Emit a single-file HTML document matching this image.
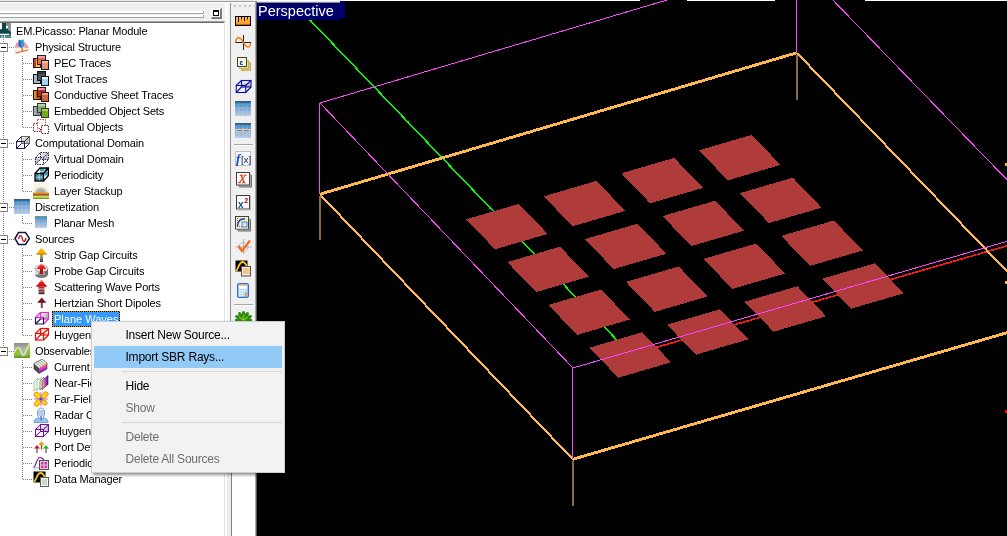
<!DOCTYPE html>
<html><head><meta charset="utf-8"><title>EM.Picasso</title>
<style>
html,body{margin:0;padding:0;}
body{width:1007px;height:536px;overflow:hidden;background:#000;position:relative;font-family:"Liberation Sans",sans-serif;}
#vp{position:absolute;left:0;top:0;}
#topline div{position:absolute;top:0;height:1px;background:#fff;}
#persp{position:absolute;left:257px;top:3px;width:83px;height:17px;background:#00006a;color:#fff;font-size:14.5px;line-height:17px;white-space:nowrap;will-change:transform;}
#persp i{position:absolute;left:83px;top:-2px;width:5px;height:17px;background:#00006a;}#persp b{position:absolute;left:0;top:-2px;width:83px;height:1px;background:#e8e8e8;}#persp u{position:absolute;left:0;top:-1px;width:83px;height:1px;background:#8a8a8a;}
#persp span{position:absolute;left:1px;top:0px;}
#left{position:absolute;left:0;top:0;width:257px;height:536px;background:#f0f0f0;}
#tree{position:absolute;left:0;top:23px;width:224px;height:513px;background:#fff;}
#treewrap{position:absolute;left:0;top:0;width:224px;height:536px;overflow:hidden;will-change:transform;}
.row{position:absolute;left:0;height:16px;width:224px;}
.ic{position:absolute;top:0;width:16px;height:16px;}
.ic svg{display:block;}
.tx{position:absolute;top:0;height:16px;line-height:16px;font-size:11px;color:#000;white-space:nowrap;letter-spacing:-0.15px;padding:0 1px;}
.tx.sel{color:#fff;left:52px !important;width:68px;box-sizing:border-box;padding:0 0 0 2px;margin:0;letter-spacing:0;background:linear-gradient(90deg,#000 50%,#f08000 50%) top left/2px 1px repeat-x,linear-gradient(90deg,#000 50%,#f08000 50%) bottom left/2px 1px repeat-x,linear-gradient(0deg,#000 50%,#f08000 50%) top left/1px 2px repeat-y,linear-gradient(0deg,#000 50%,#f08000 50%) top right/1px 2px repeat-y,#3399ff;}
.hdot{position:absolute;height:1px;background-image:linear-gradient(to right,#808080 50%,transparent 50%);background-size:2px 1px;}
.vdot{position:absolute;width:1px;background-image:linear-gradient(to bottom,#808080 50%,transparent 50%);background-size:1px 2px;}
.pm{position:absolute;left:-1px;width:9px;height:9px;box-sizing:border-box;border:1px solid #808080;background:#fff;}
.pm:after{content:"";position:absolute;left:1px;top:3px;width:5px;height:1px;background:#000;}
#hdr{position:absolute;left:0;top:0;width:226px;height:23px;background:#f0f0f0;}
#menu{position:absolute;left:91px;top:321px;width:194px;height:152px;background:#f2f2f2;border:1px solid #ccc;box-sizing:border-box;box-shadow:2px 2px 3px rgba(0,0,0,0.45);will-change:transform;font-size:12px;color:#000;}
#menu .it{position:absolute;left:2px;width:188px;height:22px;line-height:22px;white-space:nowrap;}
#menu .it span{position:absolute;left:31.5px;top:0px;letter-spacing:-0.22px}
#menu .dis{color:#6d6d6d;}
#menu .hl{background:#91c9f7;}
#menu .sep{position:absolute;left:30px;width:160px;height:1px;background:#d7d7d7;}
</style></head><body>
<svg id="vp" width="1007" height="536" viewBox="0 0 1007 536" shape-rendering="crispEdges">
<g stroke="#00ff00" stroke-width="1.5" fill="none"><line x1="310" y1="20" x2="630" y2="353.7"/></g>
<g fill="#00ff00"><rect x="325.0" y="35.8" width="1.6" height="1.6"/><rect x="345.5" y="57.2" width="1.6" height="1.6"/><rect x="366.0" y="78.6" width="1.6" height="1.6"/><rect x="386.5" y="100.0" width="1.6" height="1.6"/><rect x="407.0" y="121.4" width="1.6" height="1.6"/><rect x="427.5" y="142.8" width="1.6" height="1.6"/><rect x="448.0" y="164.2" width="1.6" height="1.6"/><rect x="468.5" y="185.6" width="1.6" height="1.6"/><rect x="489.0" y="207.0" width="1.6" height="1.6"/><rect x="509.5" y="228.4" width="1.6" height="1.6"/><rect x="530.0" y="249.8" width="1.6" height="1.6"/><rect x="550.5" y="271.2" width="1.6" height="1.6"/><rect x="571.0" y="292.6" width="1.6" height="1.6"/><rect x="591.5" y="314.0" width="1.6" height="1.6"/><rect x="612.0" y="335.4" width="1.6" height="1.6"/></g>
<g stroke="#ff1818" stroke-width="1.6" fill="none"><line x1="630" y1="355" x2="1007" y2="245.8"/></g>
<g fill="#b03b3b">
<polygon points="466.2,219.3 518.9,203.9 547.7,233.9 495.0,249.3"/>
<polygon points="507.3,262.1 560.0,246.7 588.8,276.7 536.1,292.1"/>
<polygon points="548.4,304.9 601.1,289.5 629.9,319.5 577.2,334.9"/>
<polygon points="589.5,347.7 642.2,332.3 671.0,362.3 618.3,377.7"/>
<polygon points="543.8,196.3 596.5,180.9 625.3,210.9 572.6,226.3"/>
<polygon points="584.9,239.1 637.6,223.7 666.4,253.7 613.7,269.1"/>
<polygon points="626.0,281.9 678.7,266.5 707.5,296.5 654.8,311.9"/>
<polygon points="667.1,324.7 719.8,309.3 748.6,339.3 695.9,354.7"/>
<polygon points="621.4,173.3 674.1,157.9 702.9,187.9 650.2,203.3"/>
<polygon points="662.5,216.1 715.2,200.7 744.0,230.7 691.3,246.1"/>
<polygon points="703.6,258.9 756.3,243.5 785.1,273.5 732.4,288.9"/>
<polygon points="744.7,301.7 797.4,286.3 826.2,316.3 773.5,331.7"/>
<polygon points="699.0,150.3 751.7,134.9 780.5,164.9 727.8,180.3"/>
<polygon points="740.1,193.1 792.8,177.7 821.6,207.7 768.9,223.1"/>
<polygon points="781.2,235.9 833.9,220.5 862.7,250.5 810.0,265.9"/>
<polygon points="822.3,278.7 875.0,263.3 903.8,293.3 851.1,308.7"/>
</g>
<g stroke="#ffb850" stroke-width="2.9" fill="none">
<line x1="320" y1="194.2" x2="797" y2="52.7"/>
<line x1="573" y1="459.2" x2="1007" y2="332.7"/>
</g>
<g stroke="#ffb850" stroke-width="2.1" fill="none">
<line x1="320" y1="194.5" x2="573" y2="459.5"/>
<line x1="797" y1="53" x2="1007" y2="271.3"/>
</g>
<g stroke="#8a6a44" stroke-width="2" fill="none">
<line x1="320" y1="196" x2="320" y2="240"/>
<line x1="797" y1="55" x2="797" y2="100"/>
<line x1="573" y1="461" x2="573" y2="506"/>
</g>
<g stroke="#fb46fb" stroke-width="1" fill="none">
<line x1="320" y1="103" x2="667" y2="0"/>
<line x1="319.5" y1="103" x2="319.5" y2="194"/>
<line x1="320" y1="103" x2="573" y2="368"/>
<line x1="572.5" y1="368" x2="572.5" y2="459"/>
<line x1="573" y1="368" x2="1007" y2="241.3"/>
<line x1="796.5" y1="0" x2="796.5" y2="53"/>
<line x1="832.8" y1="0" x2="1007" y2="179.7"/>
</g>
<g fill="#ffb85a"><rect x="1005" y="163" width="2" height="3"/><rect x="1005" y="281" width="2" height="3"/></g>
<rect x="1005" y="410" width="2" height="3" fill="#ff0000"/>
</svg>
<div id="topline"><div style="left:257px;width:383px"></div><div style="left:687px;width:88px"></div><div style="left:865px;width:142px"></div></div>
<div id="persp"><i></i><b></b><u></u><span>Perspective</span></div>
<div id="left">
 <div id="treewrap">
  <div id="tree"></div>
  <div class="vdot" style="left:3px;top:39px;height:314px"></div><div class="vdot" style="left:22px;top:56px;height:72px"></div><div class="vdot" style="left:22px;top:152px;height:40px"></div><div class="vdot" style="left:22px;top:216px;height:8px"></div><div class="vdot" style="left:22px;top:248px;height:88px"></div><div class="vdot" style="left:22px;top:360px;height:120px"></div>
  <div class="row" style="top:23px"><span class="ic" style="left:0px"><svg width="11" height="16" viewBox="0 0 11 16" >
<rect x="0" y="0" width="11" height="15" fill="#909090"/>
<rect x="0" y="0" width="2" height="6" fill="#fff"/>
<rect x="2" y="0" width="4" height="8" fill="#0a4848"/>
<rect x="6" y="3" width="2" height="4" fill="#fff"/>
<polygon points="0,6.5 5,6.5 8,5 8,7 11,9 11,10.8 0,10.8" fill="#0a4848"/>
<rect x="0" y="10.8" width="9" height="1.3" fill="#fff"/><rect x="9" y="10.8" width="2" height="1.3" fill="#2a7878"/>
<rect x="0" y="12.1" width="11" height="2.7" fill="#2a7878"/>
<rect x="1.5" y="12.5" width="1" height="2.5" fill="#fff"/>
<rect x="4" y="12.5" width="1" height="2.5" fill="#fff"/>
<rect x="5" y="13" width="6" height="1" fill="#60a0a0"/>
</svg></span><span class="tx" style="left:15px">EM.Picasso: Planar Module</span></div><div class="row" style="top:39px"><span class="ic" style="left:14px"><svg width="16" height="16" viewBox="0 0 16 16" >
<polygon points="1,7 3,3 11,3 15,9 13,11 1,12" fill="#ea96c4"/>
<polygon points="1,9 8,8 15,9.5 14,11.5 2,14.5 0.5,12" fill="#fff4dc"/>
<polygon points="0.5,12 2,14.5 14,11.5 15,10 14,10.5 2,13.2" fill="#e8623a"/>
<polygon points="7,8 8,12.5 9.5,12.2 8.3,8" fill="#e8623a"/>
<polygon points="4.5,0.5 7,1.5 9.5,0.5 9.5,7.5 7,9 4.5,7" fill="#1a6fb4"/>
<polygon points="7,1.5 9.5,0.5 9.5,7.5 7,9" fill="#3a9ad4"/>
</svg></span><span class="tx" style="left:34px">Physical Structure</span></div><div class="hdot" style="left:9px;top:47px;width:5px"></div><div class="pm" style="top:43px"></div><div class="row" style="top:55px"><span class="ic" style="left:33px"><svg width="16" height="16" viewBox="0 0 16 16" ><rect x="0.5" y="3.5" width="7" height="9" fill="#f2c222" stroke="#1a1a30"/><rect x="1" y="4" width="2" height="8" fill="#e03020"/><rect x="4.5" y="0.5" width="8" height="9" fill="#e26a4c" stroke="#1a1a30"/><rect x="5" y="1" width="7" height="2" fill="#f49ab0"/><rect x="8.5" y="5.5" width="7" height="9" fill="#ea9272" stroke="#1a1a30"/><rect x="9" y="6" width="6" height="2" fill="#f6c0a0"/></svg></span><span class="tx" style="left:53px">PEC Traces</span></div><div class="hdot" style="left:23px;top:63px;width:10px"></div><div class="row" style="top:71px"><span class="ic" style="left:33px"><svg width="16" height="16" viewBox="0 0 16 16" ><rect x="0.5" y="3.5" width="7" height="9" fill="#a6bcc4" stroke="#101018"/><rect x="4.5" y="0.5" width="8" height="9" fill="#4c545c" stroke="#101018"/><rect x="5" y="1" width="7" height="2" fill="#303840"/><rect x="8.5" y="5.5" width="7" height="9" fill="#a4d2f2" stroke="#101018"/><rect x="9" y="6" width="6" height="2" fill="#e8f4ff"/></svg></span><span class="tx" style="left:53px">Slot Traces</span></div><div class="hdot" style="left:23px;top:79px;width:10px"></div><div class="row" style="top:87px"><span class="ic" style="left:33px"><svg width="16" height="16" viewBox="0 0 16 16" ><rect x="0.5" y="3.5" width="7" height="9" fill="#b8501e" stroke="#30100a"/><rect x="1" y="4" width="2" height="8" fill="#e09020"/><rect x="4.5" y="0.5" width="8" height="9" fill="#a83232" stroke="#30100a"/><rect x="5" y="1" width="7" height="2" fill="#f090a8"/><rect x="8.5" y="5.5" width="7" height="9" fill="#cc6642" stroke="#30100a"/><rect x="9" y="6" width="6" height="2" fill="#e8a080"/></svg></span><span class="tx" style="left:53px">Conductive Sheet Traces</span></div><div class="hdot" style="left:23px;top:95px;width:10px"></div><div class="row" style="top:103px"><span class="ic" style="left:33px"><svg width="16" height="16" viewBox="0 0 16 16" ><rect x="0.5" y="3.5" width="7" height="9" fill="#8e96a0" stroke="#303840"/><rect x="1" y="4" width="2" height="8" fill="#a8b0b8"/><rect x="4.5" y="0.5" width="8" height="9" fill="#86b46a" stroke="#303840"/><rect x="5" y="1" width="7" height="2" fill="#b8d8a0"/><rect x="8.5" y="5.5" width="7" height="9" fill="#78a820" stroke="#303840"/><rect x="9" y="6" width="6" height="2" fill="#a8d040"/></svg></span><span class="tx" style="left:53px">Embedded Object Sets</span></div><div class="hdot" style="left:23px;top:111px;width:10px"></div><div class="row" style="top:119px"><span class="ic" style="left:33px"><svg width="16" height="16" viewBox="0 0 16 16" >
<rect x="0.5" y="4.5" width="7" height="8" fill="#fff" stroke="#b02020" stroke-dasharray="1.5,1"/>
<rect x="4.5" y="0.5" width="8" height="9" fill="#fff" stroke="#c05050" stroke-dasharray="1.5,1"/>
<rect x="8.5" y="6.5" width="7" height="8" fill="#fff" stroke="#602020" stroke-dasharray="1.5,1"/>
</svg></span><span class="tx" style="left:53px">Virtual Objects</span></div><div class="hdot" style="left:23px;top:127px;width:10px"></div><div class="row" style="top:135px"><span class="ic" style="left:14px"><svg width="16" height="16" viewBox="0 0 16 16" >
<defs><linearGradient id="g1" x1="0" y1="0" x2="1" y2="1"><stop offset="0" stop-color="#f4f4f4"/><stop offset="1" stop-color="#a8a8a0"/></linearGradient></defs>
<rect x="7.5" y="1.5" width="8" height="7" fill="url(#g1)" stroke="#707050" stroke-width="1"/>

<g fill="none" stroke="#1c1c60" stroke-width="1">
<rect x="2.5" y="6.5" width="8" height="7"/>
<line x1="2.5" y1="6.5" x2="7.5" y2="1.5"/><line x1="10.5" y1="13.5" x2="15.5" y2="8.5"/><line x1="2.5" y1="13.5" x2="7.5" y2="8.5"/><line x1="10.5" y1="6.5" x2="15.5" y2="1.5"/>
</g></svg></span><span class="tx" style="left:34px">Computational Domain</span></div><div class="hdot" style="left:9px;top:143px;width:5px"></div><div class="pm" style="top:139px"></div><div class="row" style="top:151px"><span class="ic" style="left:33px"><svg width="16" height="16" viewBox="0 0 16 16" >
<defs><linearGradient id="g2" x1="0" y1="0" x2="1" y2="1"><stop offset="0" stop-color="#f4f4f4"/><stop offset="1" stop-color="#a8a8a0"/></linearGradient></defs>
<rect x="7.5" y="1.5" width="8" height="7" fill="url(#g2)" stroke="#1c1c60" stroke-width="1" stroke-dasharray="1.5,1"/>
<polygon points="2.5,13.5 2.5,7 7.5,8.5" fill="#b8b8b8"/>
<g fill="none" stroke="#1c1c60" stroke-width="1" stroke-dasharray="1.5,1">
<rect x="2.5" y="6.5" width="8" height="7"/>
<line x1="2.5" y1="6.5" x2="7.5" y2="1.5"/><line x1="10.5" y1="13.5" x2="15.5" y2="8.5"/><line x1="2.5" y1="13.5" x2="7.5" y2="8.5"/><line x1="10.5" y1="6.5" x2="15.5" y2="1.5"/>
</g></svg></span><span class="tx" style="left:53px">Virtual Domain</span></div><div class="hdot" style="left:23px;top:159px;width:10px"></div><div class="row" style="top:167px"><span class="ic" style="left:33px"><svg width="16" height="16" viewBox="0 0 16 16" >
<polygon points="2,6.5 7,1 15.5,1 15.5,8.5 10.5,14 2,14" fill="#fff"/>
<rect x="7" y="1" width="8.5" height="7.5" fill="#4c94a8"/>
<rect x="2" y="6.5" width="8.5" height="7.5" fill="#3c8498"/>
<g stroke="#cfeaf2" stroke-width="0.8"><line x1="2" y1="10.2" x2="10.5" y2="10.2"/><line x1="6.3" y1="6.5" x2="6.3" y2="14"/><line x1="7" y1="4.6" x2="15.5" y2="4.6"/><line x1="11.3" y1="1" x2="11.3" y2="8.5"/></g>
<g stroke="#000" stroke-width="1.3" fill="none"><rect x="2" y="6.5" width="8.5" height="7.5"/><polyline points="2,6.5 7,1 15.5,1 15.5,8.5 10.5,14"/><line x1="10.5" y1="6.5" x2="15.5" y2="1"/></g>
</svg></span><span class="tx" style="left:53px">Periodicity</span></div><div class="hdot" style="left:23px;top:175px;width:10px"></div><div class="row" style="top:183px"><span class="ic" style="left:33px"><svg width="16" height="16" viewBox="0 0 16 16" >
<rect x="0" y="0" width="16" height="16" fill="#fbf6e4"/>
<path d="M1,10 C1,2 15,2 15,10 Z" fill="#d2e6d0"/>
<path d="M3,10 C3,4 13,4 13,10 Z" fill="#aeaeae"/>
<rect x="0" y="9.5" width="16" height="1.5" fill="#f08a20"/>
<rect x="0" y="11" width="16" height="1.2" fill="#d83a20"/>
<rect x="0" y="12.2" width="16" height="1.2" fill="#5ca020"/>
<rect x="0" y="13.4" width="16" height="1.2" fill="#e6d640"/>
<rect x="0" y="14.6" width="16" height="1.4" fill="#6aa428"/>
</svg></span><span class="tx" style="left:53px">Layer Stackup</span></div><div class="hdot" style="left:23px;top:191px;width:10px"></div><div class="row" style="top:199px"><span class="ic" style="left:14px"><svg width="16" height="16" viewBox="0 0 16 16" ><defs><linearGradient id="m1" x1="0" y1="0" x2="0" y2="1"><stop offset="0" stop-color="#1c8ce8"/><stop offset="0.45" stop-color="#78b4f0"/><stop offset="1" stop-color="#b4d0f4"/></linearGradient></defs><rect x="0" y="0" width="16" height="15" fill="url(#m1)"/><rect x="0" y="0" width="16" height="1.6" fill="#2a5c80"/><rect x="1.00" y="0.28" width="2.0" height="2.0" fill="#50606c"/><rect x="5.00" y="0.28" width="2.0" height="2.0" fill="#50606c"/><rect x="9.00" y="0.28" width="2.0" height="2.0" fill="#50606c"/><rect x="13.00" y="0.28" width="2.0" height="2.0" fill="#50606c"/><rect x="1.00" y="4.03" width="2.0" height="2.0" fill="#8a8a8a"/><rect x="5.00" y="4.03" width="2.0" height="2.0" fill="#8a8a8a"/><rect x="9.00" y="4.03" width="2.0" height="2.0" fill="#8a8a8a"/><rect x="13.00" y="4.03" width="2.0" height="2.0" fill="#8a8a8a"/><rect x="1.00" y="7.78" width="2.0" height="2.0" fill="#a8a09c"/><rect x="5.00" y="7.78" width="2.0" height="2.0" fill="#a8a09c"/><rect x="9.00" y="7.78" width="2.0" height="2.0" fill="#a8a09c"/><rect x="13.00" y="7.78" width="2.0" height="2.0" fill="#a8a09c"/><rect x="1.00" y="11.53" width="2.0" height="2.0" fill="#c4b4a4"/><rect x="5.00" y="11.53" width="2.0" height="2.0" fill="#c4b4a4"/><rect x="9.00" y="11.53" width="2.0" height="2.0" fill="#c4b4a4"/><rect x="13.00" y="11.53" width="2.0" height="2.0" fill="#c4b4a4"/></svg></span><span class="tx" style="left:34px">Discretization</span></div><div class="hdot" style="left:9px;top:207px;width:5px"></div><div class="pm" style="top:203px"></div><div class="row" style="top:215px"><span class="ic" style="left:33px"><svg width="16" height="16" viewBox="0 0 16 16" ><g transform="translate(2,1)"><defs><linearGradient id="m2" x1="0" y1="0" x2="0" y2="1"><stop offset="0" stop-color="#1c8ce8"/><stop offset="0.45" stop-color="#78b4f0"/><stop offset="1" stop-color="#b4d0f4"/></linearGradient></defs><rect x="0" y="0" width="12" height="12" fill="url(#m2)"/><rect x="0" y="0" width="12" height="1.6" fill="#4ea0a4"/><rect x="1.00" y="0.40" width="2.0" height="2.0" fill="#8a8a8a"/><rect x="5.00" y="0.40" width="2.0" height="2.0" fill="#8a8a8a"/><rect x="9.00" y="0.40" width="2.0" height="2.0" fill="#8a8a8a"/><rect x="1.00" y="4.40" width="2.0" height="2.0" fill="#a8a09c"/><rect x="5.00" y="4.40" width="2.0" height="2.0" fill="#a8a09c"/><rect x="9.00" y="4.40" width="2.0" height="2.0" fill="#a8a09c"/><rect x="1.00" y="8.40" width="2.0" height="2.0" fill="#c4b4a4"/><rect x="5.00" y="8.40" width="2.0" height="2.0" fill="#c4b4a4"/><rect x="9.00" y="8.40" width="2.0" height="2.0" fill="#c4b4a4"/></g></svg></span><span class="tx" style="left:53px">Planar Mesh</span></div><div class="hdot" style="left:23px;top:223px;width:10px"></div><div class="row" style="top:231px"><span class="ic" style="left:14px"><svg width="16" height="16" viewBox="0 0 16 16" >
<polygon points="1,7.5 4.5,1.5 11.5,1.5 15.5,7.5 11.5,13.5 4.5,13.5" fill="#fff" stroke="#14143c" stroke-width="1.5"/>
<path d="M4.5,8 C5.5,3.5 7.5,3.5 8.3,7.5 C9,11.5 11,11.5 12,7" fill="none" stroke="#c81010" stroke-width="1.3"/>
</svg></span><span class="tx" style="left:34px">Sources</span></div><div class="hdot" style="left:9px;top:239px;width:5px"></div><div class="pm" style="top:235px"></div><div class="row" style="top:247px"><span class="ic" style="left:33px"><svg width="16" height="16" viewBox="0 0 16 16" >
<defs><linearGradient id="st" x1="0" y1="0" x2="0" y2="1"><stop offset="0" stop-color="#b8a040"/><stop offset="0.5" stop-color="#80a070"/><stop offset="1" stop-color="#403040"/></linearGradient></defs>
<rect x="7" y="6" width="3" height="9" fill="url(#st)"/>
<polygon points="3,7.5 8.5,0.5 14,7.5" fill="#f2b400"/>
<polygon points="3,7.5 14,7.5 13,6.3 4,6.3" fill="#d08a00"/>
<polygon points="8.5,0.5 10,2.5 7,2.5" fill="#ffe060"/>
</svg></span><span class="tx" style="left:53px">Strip Gap Circuits</span></div><div class="hdot" style="left:23px;top:255px;width:10px"></div><div class="row" style="top:263px"><span class="ic" style="left:33px"><svg width="16" height="16" viewBox="0 0 16 16" >
<ellipse cx="8.5" cy="11.5" rx="6.5" ry="3.5" fill="#787878"/>
<rect x="2" y="5.5" width="13" height="6" fill="#a0a0a0"/>
<rect x="2" y="5.5" width="3" height="6" fill="#e0e0e0"/>
<rect x="12" y="5.5" width="3" height="6" fill="#686868"/>
<ellipse cx="8.5" cy="5.5" rx="6.5" ry="3.5" fill="#e4e4e4" stroke="#808080" stroke-width="0.6"/>
<rect x="7" y="5" width="3" height="6" fill="#b01010"/>
<polygon points="3.5,6 8.5,0.5 13.5,6" fill="#e81818"/>
<polygon points="8.5,0.5 10,2.5 7,2.5" fill="#ff9090"/>
</svg></span><span class="tx" style="left:53px">Probe Gap Circuits</span></div><div class="hdot" style="left:23px;top:271px;width:10px"></div><div class="row" style="top:279px"><span class="ic" style="left:33px"><svg width="16" height="16" viewBox="0 0 16 16" >
<rect x="5.5" y="8" width="6" height="1.6" fill="#c02020"/>
<rect x="5.5" y="9.6" width="6" height="1.4" fill="#909090"/>
<rect x="5.5" y="11" width="6" height="1.6" fill="#c02020"/>
<rect x="5.5" y="12.6" width="6" height="1.4" fill="#606068"/>
<rect x="5.5" y="14" width="6" height="1.2" fill="#303040"/>
<polygon points="3,7.5 8.5,0.8 14,7.5" fill="#e01818"/>
<polygon points="3,7.5 14,7.5 13,6.3 4,6.3" fill="#a01010"/>
<polygon points="8.5,0.8 10,3 7,3" fill="#ff8080"/>
</svg></span><span class="tx" style="left:53px">Scattering Wave Ports</span></div><div class="hdot" style="left:23px;top:287px;width:10px"></div><div class="row" style="top:295px"><span class="ic" style="left:33px"><svg width="16" height="16" viewBox="0 0 16 16" >
<rect x="7.8" y="6" width="2" height="7" fill="#705058"/>
<polygon points="4.5,7.5 8.8,2.5 13,7.5" fill="#8c1414"/>
<polygon points="4.5,7.5 13,7.5 12.2,6.5 5.3,6.5" fill="#4c0c0c"/>
</svg></span><span class="tx" style="left:53px">Hertzian Short Dipoles</span></div><div class="hdot" style="left:23px;top:303px;width:10px"></div><div class="row" style="top:311px"><span class="ic" style="left:33px"><svg width="16" height="16" viewBox="0 0 16 16" >
<defs><linearGradient id="pg" x1="0" y1="0" x2="1" y2="1"><stop offset="0" stop-color="#f4f4f4"/><stop offset="1" stop-color="#a0a8a0"/></linearGradient></defs>
<rect x="7.5" y="1.5" width="8" height="6.5" fill="url(#pg)" stroke="#e828d8" stroke-width="1.2"/>
<g fill="none" stroke="#e828d8" stroke-width="1.2"><line x1="2.5" y1="6.5" x2="7.5" y2="1.5"/><line x1="10.5" y1="13" x2="15.5" y2="8"/><line x1="2.5" y1="6.5" x2="10.5" y2="6.5"/></g>
<g fill="none" stroke="#18185c" stroke-width="1.2"><polyline points="2.5,6.5 2.5,13 10.5,13 10.5,6.5"/><line x1="2.5" y1="13" x2="7.5" y2="8"/></g>
</svg></span><span class="tx sel" style="left:53px">Plane Waves</span></div><div class="hdot" style="left:23px;top:319px;width:10px"></div><div class="row" style="top:327px"><span class="ic" style="left:33px"><svg width="16" height="16" viewBox="0 0 16 16" >
<rect x="7.5" y="1.5" width="8" height="6.5" fill="#f4ecd8" stroke="#e81010" stroke-width="1.2"/>
<g fill="none" stroke="#e81010" stroke-width="1.2"><rect x="2.5" y="6.5" width="8" height="6.5"/><line x1="2.5" y1="6.5" x2="7.5" y2="1.5"/><line x1="10.5" y1="13" x2="15.5" y2="8"/><line x1="2.5" y1="13" x2="7.5" y2="8"/><line x1="10.5" y1="6.5" x2="15.5" y2="1.5"/></g>
</svg></span><span class="tx" style="left:53px">Huygens Sources</span></div><div class="hdot" style="left:23px;top:335px;width:10px"></div><div class="row" style="top:343px"><span class="ic" style="left:14px"><svg width="16" height="16" viewBox="0 0 16 16" >
<defs><linearGradient id="og" x1="0" y1="0" x2="0" y2="1"><stop offset="0" stop-color="#8c8c8c"/><stop offset="0.4" stop-color="#b4b4b4"/><stop offset="1" stop-color="#a8a8b0"/></linearGradient>
<linearGradient id="og2" x1="0" y1="0" x2="0" y2="1"><stop offset="0" stop-color="#a4e048"/><stop offset="0.8" stop-color="#84c030"/><stop offset="1" stop-color="#5c9418"/></linearGradient></defs>
<rect x="0" y="0" width="16" height="15" fill="url(#og)"/>
<path d="M0,10 C1.5,7 3,4.5 4.5,4.5 C6.5,4.5 7.5,12 9.5,12 C11.5,12 13,4 16,0 L16,15 L0,15 Z" fill="url(#og2)"/>
<path d="M5.5,9 C7,13 8,13.5 9.5,13.5 C11,13.5 12,12 13,9 L12,6 C11,10 10.5,11.5 9.5,11.5 C8,11.5 7,8 6,6 Z" fill="#b4b0c4"/>
<path d="M0,10 C1.5,7 3,4.5 4.5,4.5 C6.5,4.5 7.5,12 9.5,12 C11.5,12 13,4 16,0" fill="none" stroke="#f4f0b0" stroke-width="1.2"/>
</svg></span><span class="tx" style="left:34px">Observables</span></div><div class="hdot" style="left:9px;top:351px;width:5px"></div><div class="pm" style="top:347px"></div><div class="row" style="top:359px"><span class="ic" style="left:33px"><svg width="16" height="16" viewBox="0 0 16 16" >
<defs><linearGradient id="cg" x1="0" y1="0" x2="0.3" y2="1"><stop offset="0" stop-color="#f4dc20"/><stop offset="0.35" stop-color="#f08830"/><stop offset="0.6" stop-color="#e030d0"/><stop offset="0.85" stop-color="#8020d0"/><stop offset="1" stop-color="#1030e0"/></linearGradient></defs>
<polygon points="1,4.5 9,0 14,4 6,9" fill="#eceee8"/>
<g stroke="#8a9488" stroke-width="0.8"><line x1="3" y1="3.4" x2="8" y2="7.9"/><line x1="5" y1="2.3" x2="10" y2="6.7"/><line x1="7" y1="1.2" x2="12" y2="5.4"/></g>
<polygon points="6,9 14,4 14,10 6,14.5" fill="url(#cg)"/>
<polygon points="1,4.5 6,9 6,14.5 1,10" fill="#4a4a44"/>
<polygon points="1,4.5 9,0 14,4 14,10 6,14.5 1,10" fill="none" stroke="#303030" stroke-width="0.6"/>
</svg></span><span class="tx" style="left:53px">Current Distributions</span></div><div class="hdot" style="left:23px;top:367px;width:10px"></div><div class="row" style="top:375px"><span class="ic" style="left:33px"><svg width="16" height="16" viewBox="0 0 16 16" >
<defs><linearGradient id="ng" x1="0" y1="0" x2="1" y2="0"><stop offset="0" stop-color="#f0e040"/><stop offset="0.5" stop-color="#e040c0"/><stop offset="1" stop-color="#2020d0"/></linearGradient></defs>
<polygon points="1,7 5,3 5,12 1,16" fill="#f4fff4" stroke="#80b080" stroke-width="0.7"/>
<polygon points="4,6.5 8,2.5 8,11.5 4,15.5" fill="#f4fff4" stroke="#80b080" stroke-width="0.7"/>
<polygon points="7,6 11,2 11,11 7,15" fill="#fff" stroke="#606060" stroke-width="0.7"/>
<polygon points="9,6 15,0.5 15,9.5 9,14.5" fill="url(#ng)" stroke="#202020" stroke-width="0.6"/>
</svg></span><span class="tx" style="left:53px">Near-Field Sensors</span></div><div class="hdot" style="left:23px;top:383px;width:10px"></div><div class="row" style="top:391px"><span class="ic" style="left:33px"><svg width="16" height="16" viewBox="0 0 16 16" >
<g fill="#f4d818" stroke="#e88010" stroke-width="0.8">
<ellipse cx="4.5" cy="4.5" rx="4" ry="2.6" transform="rotate(45 4.5 4.5)"/>
<ellipse cx="12" cy="4" rx="3.6" ry="2.6" transform="rotate(-45 12 4)"/>
<ellipse cx="4.5" cy="12" rx="3.8" ry="2.6" transform="rotate(-45 4.5 12)"/>
<ellipse cx="11.5" cy="11.5" rx="3" ry="2.2" transform="rotate(45 11.5 11.5)"/>
</g>
<g stroke="#e060b0" stroke-width="1"><line x1="8" y1="1" x2="8" y2="15"/><line x1="1" y1="8" x2="15" y2="8"/></g>
<circle cx="8" cy="8" r="1.6" fill="#3050c0"/>
</svg></span><span class="tx" style="left:53px">Far-Field Radiation Patterns</span></div><div class="hdot" style="left:23px;top:399px;width:10px"></div><div class="row" style="top:407px"><span class="ic" style="left:33px"><svg width="16" height="16" viewBox="0 0 16 16" >
<path d="M1,15.5 C1,11.5 4,11 8,11 C12,11 15,11.5 15,15.5 Z" fill="#9cc4ec" stroke="#5890d0" stroke-width="0.8"/>
<path d="M8,13.5 C3,9 3.5,1 8,1 C12.5,1 13,9 8,13.5 Z" fill="#eef6ff" stroke="#5890d0" stroke-width="0.9"/>
<g stroke="#5890d0" stroke-width="0.8"><line x1="5.5" y1="4" x2="10.5" y2="4"/><line x1="5" y1="6" x2="11" y2="6"/><line x1="5.5" y1="8" x2="10.5" y2="8"/></g>
<rect x="7.4" y="9" width="1.2" height="4" fill="#3060b0"/>
</svg></span><span class="tx" style="left:53px">Radar Cross Sections</span></div><div class="hdot" style="left:23px;top:415px;width:10px"></div><div class="row" style="top:423px"><span class="ic" style="left:33px"><svg width="16" height="16" viewBox="0 0 16 16" >
<defs><linearGradient id="hg" x1="0" y1="0" x2="1" y2="1"><stop offset="0" stop-color="#f8f8f8"/><stop offset="1" stop-color="#b0b8b0"/></linearGradient></defs>
<rect x="7.5" y="1.5" width="8" height="7" fill="url(#hg)" stroke="#7010a0" stroke-width="1.05"/>
<g fill="none" stroke="#7010a0" stroke-width="1.05"><rect x="2.5" y="6.5" width="8" height="7"/><line x1="2.5" y1="6.5" x2="7.5" y2="1.5"/><line x1="10.5" y1="13.5" x2="15.5" y2="8.5"/><line x1="2.5" y1="13.5" x2="7.5" y2="8.5"/><line x1="10.5" y1="6.5" x2="15.5" y2="1.5"/></g>
</svg></span><span class="tx" style="left:53px">Huygens Surfaces</span></div><div class="hdot" style="left:23px;top:431px;width:10px"></div><div class="row" style="top:439px"><span class="ic" style="left:33px"><svg width="16" height="16" viewBox="0 0 16 16" >
<rect x="3.3" y="9" width="1.4" height="5" fill="#706068"/><polygon points="1,9.5 4,6 7,9.5" fill="#e01010"/>
<rect x="7.8" y="5.5" width="1.4" height="5" fill="#806040"/><polygon points="5.5,6 8.5,2 11.5,6" fill="#e8a010"/>
<rect x="12.3" y="9" width="1.4" height="5" fill="#607060"/><polygon points="10,9.5 13,6 16,9.5" fill="#10c020"/>
</svg></span><span class="tx" style="left:53px">Port Definitions</span></div><div class="hdot" style="left:23px;top:447px;width:10px"></div><div class="row" style="top:455px"><span class="ic" style="left:33px"><svg width="16" height="16" viewBox="0 0 16 16" >
<path d="M0.5,12.5 C3,12 3.5,2.5 7,2.5 C9,2.5 10,3.5 11,5.5" fill="none" stroke="#7020a0" stroke-width="1.2"/>
<line x1="0.5" y1="13" x2="7" y2="13" stroke="#b0b0b0"/>
<rect x="6.5" y="5.5" width="9" height="9" fill="#d0d0d0" stroke="#505050"/>
<g fill="#e828c0"><rect x="8" y="7" width="2.5" height="2.5"/><rect x="11.5" y="7" width="2.5" height="2.5"/><rect x="8" y="10.5" width="2.5" height="2.5"/><rect x="11.5" y="10.5" width="2.5" height="2.5"/></g>
</svg></span><span class="tx" style="left:53px">Periodic Characteristics</span></div><div class="hdot" style="left:23px;top:463px;width:10px"></div><div class="row" style="top:471px"><span class="ic" style="left:33px"><svg width="16" height="16" viewBox="0 0 16 16" >
<rect x="0.5" y="0.5" width="12" height="11" fill="#000"/>
<path d="M1,11 C3,10 4,2 7.5,2 C10,2 11,4 12,7" fill="none" stroke="#f4c010" stroke-width="1.8"/>
<rect x="7.5" y="6.5" width="8" height="9" fill="#f4f8ec" stroke="#606060"/>
<g stroke="#90a890" stroke-width="0.8"><line x1="9" y1="9" x2="14" y2="9"/><line x1="9" y1="11" x2="14" y2="11"/><line x1="9" y1="13" x2="14" y2="13"/></g>
</svg></span><span class="tx" style="left:53px">Data Manager</span></div><div class="hdot" style="left:23px;top:479px;width:10px"></div>
 </div>
 <div id="hdr">
  <div style="position:absolute;left:0;top:11px;width:204px;height:3px;background:#fff;border-bottom:1px solid #a4a4a4;border-right:1px solid #a4a4a4;box-sizing:border-box"></div>
  <div style="position:absolute;left:0;top:15px;width:204px;height:3px;background:#fff;border-bottom:1px solid #a4a4a4;border-right:1px solid #a4a4a4;box-sizing:border-box"></div>
  <div style="position:absolute;left:211px;top:8px;width:11px;height:11px;box-sizing:border-box;background:#f0f0f0;border-style:solid;border-width:1px 2px 2px 1px;border-color:#fff #7c7c7c #7c7c7c #fff;"></div>
  <div style="position:absolute;left:213px;top:10px;width:6px;height:6px;box-sizing:border-box;background:#fff;border:1px solid #000;border-top-width:2px"></div>
  <div style="position:absolute;left:0;top:21px;width:225px;height:1px;background:#a2a2a2"></div>
  <div style="position:absolute;left:0;top:22px;width:224px;height:1px;background:#6a6a6a"></div>
 </div>
 <div style="position:absolute;left:224px;top:23px;width:1px;height:536px;background:#e2e2e2"></div>
 <div style="position:absolute;left:225px;top:1px;width:2px;height:536px;background:#fff"></div>
 <div style="position:absolute;left:227px;top:1px;width:3px;height:536px;background:#f6f6f6"></div>
 <div style="position:absolute;left:230px;top:1px;width:1px;height:536px;background:#929292"></div>
 <div style="position:absolute;left:255px;top:1px;width:1px;height:536px;background:#a8a8a8"></div>
 <div style="position:absolute;left:256px;top:1px;width:1px;height:536px;background:#585858"></div>
 <div style="position:absolute;left:227px;top:473px;width:4px;height:63px;background:#ececec"></div>
 <div style="position:absolute;left:231px;top:473px;width:1px;height:63px;background:#848484"></div>
 <div style="position:absolute;left:232px;top:473px;width:23px;height:63px;background:#fff"></div>
 <div id="tb"><div style="position:absolute;left:234px;top:5px;width:2px;height:2px;background:#c4c4c4"></div><div style="position:absolute;left:239px;top:5px;width:2px;height:2px;background:#c4c4c4"></div><div style="position:absolute;left:244px;top:5px;width:2px;height:2px;background:#c4c4c4"></div><div style="position:absolute;left:249px;top:5px;width:2px;height:2px;background:#c4c4c4"></div><div style="position:absolute;left:254px;top:5px;width:2px;height:2px;background:#c4c4c4"></div><svg style="position:absolute;left:235px;top:16px" width="16" height="10" viewBox="0 0 16 10">
<defs><linearGradient id="rg" x1="0" y1="0" x2="0" y2="1"><stop offset="0" stop-color="#ffc860"/><stop offset="0.4" stop-color="#ffb040"/><stop offset="1" stop-color="#f89010"/></linearGradient></defs>
<rect x="0.5" y="0.5" width="15" height="9" fill="url(#rg)" stroke="#000"/>
<g fill="#201000"><rect x="3" y="1" width="1" height="5"/><rect x="6" y="1" width="1" height="2.5"/><rect x="9" y="1" width="1" height="4"/><rect x="12" y="1" width="1" height="2.5"/></g>
<rect x="1" y="8" width="14" height="1" fill="#c06000"/></svg><svg style="position:absolute;left:235px;top:35px" width="16" height="16" viewBox="0 0 16 16">
<g stroke="#202020" stroke-width="1"><line x1="8.5" y1="0" x2="8.5" y2="15"/><line x1="0" y1="7.5" x2="16" y2="7.5"/></g>
<path d="M0.5,7.5 C1.5,1 5,1 8.5,7.5 C11.5,13.5 15,13.5 15.8,8" fill="none" stroke="#f87810" stroke-width="1.5"/></svg><svg style="position:absolute;left:236px;top:57px" width="16" height="14" viewBox="0 0 16 14">
<rect x="5.5" y="5.5" width="9" height="8" fill="#f0c060" stroke="#c07820" stroke-dasharray="1,1"/>
<rect x="3.5" y="3.5" width="9" height="8" fill="#d8e8a0" stroke="#80a020" stroke-dasharray="1,1"/>
<rect x="1.5" y="0.5" width="9" height="9" fill="#f8f8d0" stroke="#404040"/>
<text x="3.5" y="7.8" font-family="Liberation Sans" font-size="8" font-weight="bold" fill="#1030b0">ε</text></svg><svg style="position:absolute;left:235px;top:79px" width="17" height="15" viewBox="0 0 17 15">
<defs><linearGradient id="bg1" x1="0" y1="0" x2="0" y2="1"><stop offset="0" stop-color="#fafafa"/><stop offset="1" stop-color="#a8a8a8"/></linearGradient></defs>
<rect x="6.5" y="1.5" width="9.5" height="6.5" fill="url(#bg1)" stroke="#0c10a0" stroke-width="1.1"/>
<g fill="none" stroke="#0c10a0" stroke-width="1.1"><rect x="1.2" y="6.5" width="9.5" height="7"/><line x1="1.2" y1="6.5" x2="6.5" y2="1.5"/><line x1="10.7" y1="13.5" x2="16" y2="8"/><line x1="1.2" y1="13.5" x2="6.5" y2="8"/><line x1="10.7" y1="6.5" x2="16" y2="1.5"/></g></svg><svg style="position:absolute;left:235px;top:101px" width="16" height="15" viewBox="0 0 16 15"><defs><linearGradient id="tm1" x1="0" y1="0" x2="0" y2="1"><stop offset="0" stop-color="#1c8ce8"/><stop offset="0.45" stop-color="#78b4f0"/><stop offset="1" stop-color="#b4d0f4"/></linearGradient></defs><rect x="0" y="0" width="16" height="15" fill="url(#tm1)"/><rect x="0" y="0" width="16" height="1.6" fill="#2a5c80"/><rect x="1.00" y="0.28" width="2.0" height="2.0" fill="#50606c"/><rect x="5.00" y="0.28" width="2.0" height="2.0" fill="#50606c"/><rect x="9.00" y="0.28" width="2.0" height="2.0" fill="#50606c"/><rect x="13.00" y="0.28" width="2.0" height="2.0" fill="#50606c"/><rect x="1.00" y="4.03" width="2.0" height="2.0" fill="#8a8a8a"/><rect x="5.00" y="4.03" width="2.0" height="2.0" fill="#8a8a8a"/><rect x="9.00" y="4.03" width="2.0" height="2.0" fill="#8a8a8a"/><rect x="13.00" y="4.03" width="2.0" height="2.0" fill="#8a8a8a"/><rect x="1.00" y="7.78" width="2.0" height="2.0" fill="#a8a09c"/><rect x="5.00" y="7.78" width="2.0" height="2.0" fill="#a8a09c"/><rect x="9.00" y="7.78" width="2.0" height="2.0" fill="#a8a09c"/><rect x="13.00" y="7.78" width="2.0" height="2.0" fill="#a8a09c"/><rect x="1.00" y="11.53" width="2.0" height="2.0" fill="#c4b4a4"/><rect x="5.00" y="11.53" width="2.0" height="2.0" fill="#c4b4a4"/><rect x="9.00" y="11.53" width="2.0" height="2.0" fill="#c4b4a4"/><rect x="13.00" y="11.53" width="2.0" height="2.0" fill="#c4b4a4"/></svg><svg style="position:absolute;left:235px;top:123px" width="16" height="15" viewBox="0 0 16 15"><defs><linearGradient id="tm2" x1="0" y1="0" x2="0" y2="1"><stop offset="0" stop-color="#1c8ce8"/><stop offset="0.45" stop-color="#78b4f0"/><stop offset="1" stop-color="#b4d0f4"/></linearGradient></defs><rect x="0" y="0" width="16" height="15" fill="url(#tm2)"/><rect x="0" y="0" width="16" height="1.6" fill="#2a5c80"/><rect x="1.00" y="0.28" width="2.0" height="2.0" fill="#50606c"/><rect x="5.00" y="0.28" width="2.0" height="2.0" fill="#50606c"/><rect x="9.00" y="0.28" width="2.0" height="2.0" fill="#50606c"/><rect x="13.00" y="0.28" width="2.0" height="2.0" fill="#50606c"/><rect x="1.00" y="4.03" width="2.0" height="2.0" fill="#8a8a8a"/><rect x="5.00" y="4.03" width="2.0" height="2.0" fill="#8a8a8a"/><rect x="9.00" y="4.03" width="2.0" height="2.0" fill="#8a8a8a"/><rect x="13.00" y="4.03" width="2.0" height="2.0" fill="#8a8a8a"/><rect x="1.00" y="7.78" width="2.0" height="2.0" fill="#a8a09c"/><rect x="5.00" y="7.78" width="2.0" height="2.0" fill="#a8a09c"/><rect x="9.00" y="7.78" width="2.0" height="2.0" fill="#a8a09c"/><rect x="13.00" y="7.78" width="2.0" height="2.0" fill="#a8a09c"/><rect x="1.00" y="11.53" width="2.0" height="2.0" fill="#c4b4a4"/><rect x="5.00" y="11.53" width="2.0" height="2.0" fill="#c4b4a4"/><rect x="9.00" y="11.53" width="2.0" height="2.0" fill="#c4b4a4"/><rect x="13.00" y="11.53" width="2.0" height="2.0" fill="#c4b4a4"/><rect x="1" y="6" width="14" height="3.4" fill="#d8d8d8"/><rect x="2" y="7.2" width="12" height="1" fill="#606060"/><rect x="7" y="5" width="2" height="5.5" fill="#c0c0c0"/></svg><div style="position:absolute;left:234px;top:144px;width:19px;height:1px;background:#a6a6a6"></div><div style="position:absolute;left:234px;top:145px;width:19px;height:1px;background:#fff"></div><svg style="position:absolute;left:235px;top:151px" width="16" height="15" viewBox="0 0 16 15">
<rect x="0.5" y="0.5" width="15" height="14" fill="#f4f8ff" stroke="#8090a8" stroke-dasharray="1,1"/>
<text x="1" y="11.5" font-family="Liberation Serif" font-size="13" font-style="italic" font-weight="bold" fill="#1848c0">f</text>
<text x="6" y="12" font-family="Liberation Sans" font-size="9.5" fill="#202040">[x]</text></svg><svg style="position:absolute;left:236px;top:172px" width="17" height="17" viewBox="0 0 17 17"><rect x="3" y="3" width="13" height="12.5" fill="#707070"/><rect x="2" y="2" width="13" height="12.5" fill="#b0b0b0"/><rect x="0.5" y="0.5" width="13" height="12.5" fill="#fafafa" stroke="#404040"/><text x="2.6" y="11.2" font-family="Liberation Serif" font-size="12.5" font-style="italic" fill="#f03810" stroke="#f03810" stroke-width="0.3">X</text></svg><svg style="position:absolute;left:236px;top:195px" width="16" height="16" viewBox="0 0 16 16"><rect x="0.5" y="0.5" width="13" height="13.5" fill="#fafafa" stroke="#404040"/><rect x="14" y="1" width="1" height="14" fill="#c0c0c0"/><rect x="1" y="14.5" width="14" height="1" fill="#c0c0c0"/><text x="2" y="12.5" font-family="Liberation Sans" font-size="10" font-weight="bold" fill="#1850b0">x</text><text x="8.2" y="7.5" font-family="Liberation Sans" font-size="7" font-weight="bold" fill="#a01010">2</text></svg><svg style="position:absolute;left:235px;top:216px" width="17" height="17" viewBox="0 0 17 17"><rect x="3" y="3" width="13" height="12.5" fill="#707070"/><rect x="2" y="2" width="13" height="12.5" fill="#b0b0b0"/><rect x="0.5" y="0.5" width="13" height="12.5" fill="#fafafa" stroke="#404040"/><rect x="1" y="1" width="12" height="11.5" fill="#f4f0c8"/><path d="M2.5,10 C3,4 6,2.5 10,3" fill="none" stroke="#1040c0" stroke-width="1.5"/><g stroke="#404040" stroke-width="0.7" stroke-dasharray="1,1"><line x1="2.5" y1="2" x2="2.5" y2="11"/><line x1="2" y1="10.5" x2="12" y2="10.5"/></g><rect x="7" y="6" width="5" height="5" fill="#d0e8ff" stroke="#3070c0" stroke-width="0.8"/></svg><svg style="position:absolute;left:235px;top:238px" width="17" height="17" viewBox="0 0 17 17">
<g stroke="#b0b0b0" stroke-width="1"><line x1="8.5" y1="1" x2="8.5" y2="16"/><line x1="0.5" y1="9" x2="16.5" y2="9"/></g>
<circle cx="8.5" cy="9" r="4.5" fill="none" stroke="#b8b8b8"/>
<path d="M3.5,8 L7,13 L15,2.5" fill="none" stroke="#f86818" stroke-width="2.2"/></svg><svg style="position:absolute;left:235px;top:260px" width="17" height="17" viewBox="0 0 17 17">
<rect x="0.5" y="0.5" width="12" height="11" fill="#000"/>
<path d="M1,11 C3,10 4,2 7.5,2 C10,2 11,4 12,7" fill="none" stroke="#f8c410" stroke-width="1.8"/>
<rect x="6.5" y="6.5" width="9" height="9.5" fill="#f4ecd8" stroke="#505050"/>
<g fill="#e8a040"><rect x="8" y="8.5" width="6.5" height="1"/><rect x="8" y="10.5" width="6.5" height="1"/><rect x="8" y="12.5" width="6.5" height="1"/></g></svg><svg style="position:absolute;left:237px;top:283px" width="12" height="15" viewBox="0 0 12 15">
<rect x="0.6" y="0.6" width="10.8" height="13.8" rx="1.5" fill="#b4d4f8" stroke="#2f6fd0" stroke-width="1.2"/>
<rect x="2" y="1.8" width="8" height="4" fill="#fff"/><rect x="2" y="1.8" width="8" height="0.9" fill="#f0a040"/>
<g fill="#fff"><rect x="2.2" y="7.2" width="1.6" height="1.4"/><rect x="4.7" y="7.2" width="1.6" height="1.4"/><rect x="7.2" y="7.2" width="1.6" height="1.4"/><rect x="2.2" y="9.6" width="1.6" height="1.4"/><rect x="4.7" y="9.6" width="1.6" height="1.4"/><rect x="2.2" y="12" width="1.6" height="1.4"/><rect x="4.7" y="12" width="1.6" height="1.4"/></g>
<rect x="8.2" y="9.3" width="1.6" height="4.2" fill="#f89818"/></svg><div style="position:absolute;left:234px;top:304px;width:19px;height:1px;background:#a6a6a6"></div><div style="position:absolute;left:234px;top:305px;width:19px;height:1px;background:#fff"></div><svg style="position:absolute;left:235px;top:310px" width="17" height="12" viewBox="0 0 17 12">
<g fill="#2f8a0c"><ellipse cx="8.5" cy="6" rx="1.9" ry="5" transform="rotate(-90 8.5 10.5)"/><ellipse cx="8.5" cy="6" rx="1.9" ry="5" transform="rotate(-60 8.5 10.5)"/><ellipse cx="8.5" cy="6" rx="1.9" ry="5" transform="rotate(-30 8.5 10.5)"/><ellipse cx="8.5" cy="6" rx="1.9" ry="5" transform="rotate(0 8.5 10.5)"/><ellipse cx="8.5" cy="6" rx="1.9" ry="5" transform="rotate(30 8.5 10.5)"/><ellipse cx="8.5" cy="6" rx="1.9" ry="5" transform="rotate(60 8.5 10.5)"/><ellipse cx="8.5" cy="6" rx="1.9" ry="5" transform="rotate(90 8.5 10.5)"/><ellipse cx="8.5" cy="10" rx="5" ry="3.5"/></g>
<g fill="#5cb824"><ellipse cx="8.5" cy="7.5" rx="1" ry="3.2"/><ellipse cx="8.5" cy="7.5" rx="1" ry="3.2" transform="rotate(-50 8.5 10.5)"/><ellipse cx="8.5" cy="7.5" rx="1" ry="3.2" transform="rotate(50 8.5 10.5)"/></g>
<rect x="8" y="9" width="1" height="1" fill="#e0e040"/></svg></div>
 <div style="position:absolute;left:0;top:0;width:257px;height:1px;background:#ececec"></div><div style="position:absolute;left:0;top:1px;width:257px;height:1px;background:#9c9c9c"></div><div style="position:absolute;left:0;top:2px;width:255px;height:1px;background:#fff"></div>
</div>
<div id="menu">
 <div class="it" style="top:2px"><span>Insert New Source...</span></div>
 <div class="it hl" style="top:24px"><span>Import SBR Rays...</span></div>
 <div class="sep" style="top:49px"></div>
 <div class="it" style="top:53px"><span>Hide</span></div>
 <div class="it dis" style="top:75px"><span>Show</span></div>
 <div class="sep" style="top:100px"></div>
 <div class="it dis" style="top:104px"><span>Delete</span></div>
 <div class="it dis" style="top:126px"><span>Delete All Sources</span></div>
</div>
</body></html>
